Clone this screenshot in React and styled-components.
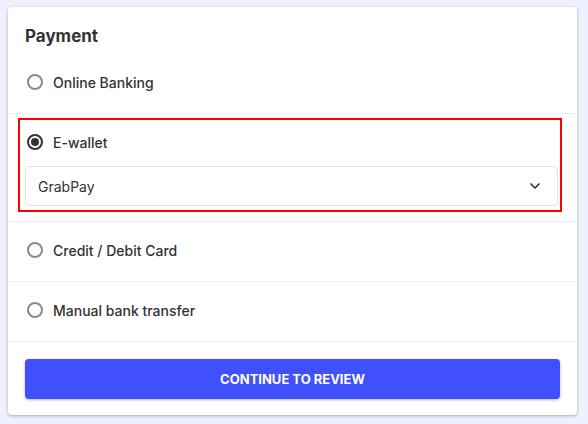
import React, { useState } from 'react'
import styled, { createGlobalStyle } from 'styled-components'
import { ChevronDown } from 'lucide-react'

const GlobalStyle = createGlobalStyle`
  body {
    margin: 0;
    background: #eef0fd;
    font-family: Inter, "Liberation Sans", sans-serif;
    color: #333;
  }
`

const Card = styled.div`
  margin: 7px 11px 9px 8px;
  width: 569px;
  background: #fff;
  border-radius: 4px;
  box-shadow: 0 1px 3px rgba(0, 0, 0, 0.3);
  display: flex;
  flex-direction: column;
`

const Title = styled.h2`
  margin: 0;
  height: 47px;
  box-sizing: border-box;
  padding: 19px 17px 0;
  font-size: 17px;
  line-height: 20px;
  font-weight: 700;
  color: #333;
`

const Row = styled.label`
  display: flex;
  align-items: center;
  gap: 10px;
  height: 60px;
  box-sizing: border-box;
  padding: 0 17px 3px 19px;
  border-bottom: 1px solid #eeeeee;
  cursor: pointer;
`

const Section = styled.div`
  padding: 4px 15px 9px 10px;
  border-bottom: 1px solid #eeeeee;
`

const Highlight = styled.div`
  border: 2px solid #ff0000;
  display: flex;
  flex-direction: column;
  padding-bottom: 4px;
`

const InnerRow = styled(Row)`
  height: 44px;
  padding: 0 0 0 7px;
  border-bottom: none;
  margin-bottom: 2px;
`

const Radio = styled.span`
  width: 16px;
  height: 16px;
  box-sizing: border-box;
  border-radius: 50%;
  border: 2px solid ${p => (p.$checked ? '#333' : '#8a8a8a')};
  display: flex;
  align-items: center;
  justify-content: center;
  flex-shrink: 0;
  &::after {
    content: '';
    display: ${p => (p.$checked ? 'block' : 'none')};
    width: 8px;
    height: 8px;
    border-radius: 50%;
    background: #333;
  }
`

const Label = styled.span`
  font-size: 14px;
  font-weight: 500;
  color: #333;
`

const SelectBox = styled.div`
  margin: 0 2px 0 5px;
  height: 40px;
  box-sizing: border-box;
  border: 1px solid #e3e3e3;
  border-radius: 4px;
  display: flex;
  align-items: center;
  justify-content: space-between;
  padding: 0 14px 0 12px;
  font-size: 14px;
  color: #333;
`

const Footer = styled.div`
  padding: 17px 17px 16px;
`

const Button = styled.button`
  width: 100%;
  height: 40px;
  border: none;
  border-radius: 4px;
  background: #4150fe;
  color: #fff;
  font-family: Inter, "Liberation Sans", sans-serif;
  font-size: 13px;
  font-weight: 700;
  text-transform: uppercase;
  box-shadow: 0 1px 3px rgba(0, 0, 0, 0.3);
  cursor: pointer;
`

const methods = [
  { id: 'online', label: 'Online Banking' },
  { id: 'ewallet', label: 'E-wallet' },
  { id: 'card', label: 'Credit / Debit Card' },
  { id: 'manual', label: 'Manual bank transfer' },
]

export default function App() {
  const [selected, setSelected] = useState('ewallet')

  return (
    <>
      <GlobalStyle />
      <Card>
        <Title>Payment</Title>
        {methods.map(m =>
          m.id === 'ewallet' ? (
            <Section key={m.id}>
              <Highlight>
                <InnerRow onClick={() => setSelected(m.id)}>
                  <Radio $checked={selected === m.id} />
                  <Label>{m.label}</Label>
                </InnerRow>
                <SelectBox>
                  GrabPay
                  <ChevronDown size={16} strokeWidth={2.5} color="#333" />
                </SelectBox>
              </Highlight>
            </Section>
          ) : (
            <Row key={m.id} onClick={() => setSelected(m.id)}>
              <Radio $checked={selected === m.id} />
              <Label>{m.label}</Label>
            </Row>
          )
        )}
        <Footer>
          <Button>Continue to review</Button>
        </Footer>
      </Card>
    </>
  )
}
